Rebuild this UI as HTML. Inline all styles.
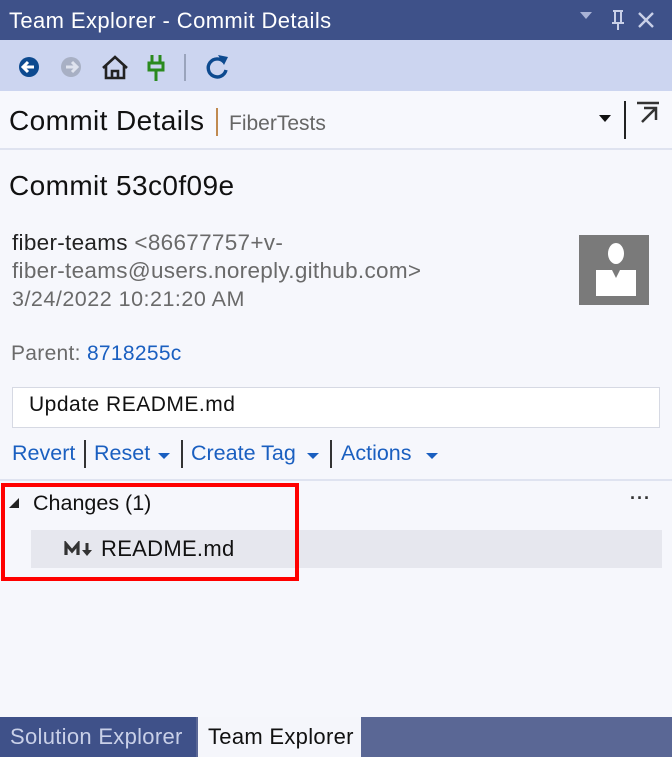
<!DOCTYPE html>
<html><head><style>
*{margin:0;padding:0;box-sizing:border-box}
body{width:672px;height:757px;background:#f6f7fc;font-family:"Liberation Sans",sans-serif;position:relative;overflow:hidden;color:#1e1e1e}
.a{position:absolute;white-space:nowrap}
.lk{color:#1a5fc0}
</style></head><body>
<div class="a" style="left:0;top:0;width:672px;height:40px;background:#3e5189"></div>
<div class="a" style="left:9px;top:8px;font-size:22px;color:#fff;letter-spacing:0.4px">Team Explorer - Commit Details</div>
<div class="a" style="left:580px;top:12px;width:0;height:0;border-left:6px solid transparent;border-right:6px solid transparent;border-top:7px solid #a9b3d6"></div>
<svg class="a" style="left:608px;top:8px" width="60" height="24"><path d="M5 3h10M7 3v12M13 3v12M4 15h12M10 15v7" stroke="#c9d0e8" stroke-width="2" fill="none"/><path d="M31 5l14 14M45 5L31 19" stroke="#c9d0e8" stroke-width="2.4"/></svg>
<div class="a" style="left:0;top:40px;width:672px;height:51px;background:#ccd5f0"></div>
<svg class="a" style="left:10px;top:50px" width="230" height="34">
<circle cx="19" cy="17" r="10" fill="#0d4a8f"/><path d="M24 17H14M18 12l-5 5 5 5" stroke="#fff" stroke-width="3" fill="none"/>
<circle cx="61" cy="17" r="10" fill="#a8b0c4"/><path d="M56 17h10M62 12l5 5-5 5" stroke="#dfe3ee" stroke-width="3" fill="none"/>
<path d="M93 18L105 7l12 11M96 16v12h18V16M102 28v-7h6v7" stroke="#222" stroke-width="2.6" fill="none"/>
<path d="M142 5v8M150 5v8M139 13h14v7h-14zM146 20v11" stroke="#2a8a1e" stroke-width="3" fill="none"/>
<path d="M175 4v27" stroke="#8a93aa" stroke-width="1.5"/>
<path d="M214 12a9 9 0 1 0 2 8" stroke="#0d4a8f" stroke-width="3.4" fill="none"/><path d="M208 5l10 2-4 8z" fill="#0d4a8f"/>
</svg>
<div class="a" style="left:0;top:91px;width:672px;height:59px;background:#f7f8fd;border-bottom:2px solid #dfe3f0"></div>
<div class="a" style="left:9px;top:105px;font-size:28px;color:#111;letter-spacing:0.4px">Commit Details</div>
<div class="a" style="left:216px;top:108px;width:1.5px;height:28px;background:#c08a50"></div>
<div class="a" style="left:229px;top:112px;font-size:21px;color:#666">FiberTests</div>
<div class="a" style="left:599px;top:115px;width:0;height:0;border-left:6px solid transparent;border-right:6px solid transparent;border-top:7px solid #111"></div>
<div class="a" style="left:624px;top:101px;width:1.5px;height:38px;background:#222"></div>
<svg class="a" style="left:634px;top:100px" width="30" height="30"><path d="M3 3h22M22 8L8 22M10 8h12v12" stroke="#333" stroke-width="2.5" fill="none"/></svg>
<div class="a" style="left:9px;top:170px;font-size:28px;color:#111;letter-spacing:0.4px">Commit 53c0f09e</div>
<div class="a" style="left:12px;top:230px;font-size:22.5px;letter-spacing:0.3px;color:#222">fiber-teams <span style="color:#6a6a6a">&lt;86677757+v-</span></div>
<div class="a" style="left:12px;top:258px;font-size:22.5px;letter-spacing:0.3px;color:#6a6a6a">fiber-teams@users.noreply.github.com&gt;</div>
<div class="a" style="left:12px;top:287px;font-size:21.5px;letter-spacing:0.5px;color:#6a6a6a">3/24/2022 10:21:20 AM</div>
<div class="a" style="left:579px;top:235px;width:70px;height:70px;background:#7a7a7a"></div>
<div class="a" style="left:608px;top:243px;width:16px;height:21px;border-radius:50%;background:#fff"></div>
<div class="a" style="left:596px;top:270px;width:40px;height:26px;background:#fff"></div>
<div class="a" style="left:612px;top:270px;width:8px;height:8px;background:#7a7a7a;clip-path:polygon(0 0,100% 0,50% 100%)"></div>
<div class="a" style="left:11px;top:342px;font-size:21px;letter-spacing:0.3px;color:#6a6a6a">Parent: <span class="lk">8718255c</span></div>
<div class="a" style="left:12px;top:387px;width:648px;height:41px;background:#fff;border:1.5px solid #d6d9e3"></div>
<div class="a" style="left:29px;top:393px;font-size:21px;letter-spacing:0.5px;color:#111">Update README.md</div>
<div class="a lk" style="left:12px;top:441px;font-size:21.5px">Revert</div>
<div class="a" style="left:84px;top:440px;width:1.5px;height:28px;background:#333"></div>
<div class="a lk" style="left:94px;top:441px;font-size:21.5px">Reset</div>
<div class="a" style="left:158px;top:453px;border-left:6px solid transparent;border-right:6px solid transparent;border-top:6px solid #1a5fc0"></div>
<div class="a" style="left:181px;top:440px;width:1.5px;height:28px;background:#333"></div>
<div class="a lk" style="left:191px;top:441px;font-size:21.5px">Create Tag</div>
<div class="a" style="left:307px;top:453px;border-left:6px solid transparent;border-right:6px solid transparent;border-top:6px solid #1a5fc0"></div>
<div class="a" style="left:330px;top:440px;width:1.5px;height:28px;background:#333"></div>
<div class="a lk" style="left:341px;top:441px;font-size:21.5px">Actions</div>
<div class="a" style="left:426px;top:453px;border-left:6px solid transparent;border-right:6px solid transparent;border-top:6px solid #1a5fc0"></div>
<div class="a" style="left:0;top:479px;width:672px;height:2px;background:#dfe3f0"></div>
<div class="a" style="left:9px;top:498px;width:0;height:0;border-left:10px solid transparent;border-bottom:10px solid #222"></div>
<div class="a" style="left:33px;top:491px;font-size:21.5px;color:#111">Changes (1)</div>
<div class="a" style="left:630px;top:488px;font-size:18px;font-weight:bold;color:#333;letter-spacing:1px">···</div>
<div class="a" style="left:31px;top:530px;width:631px;height:38px;background:#e6e7ee"></div>
<svg class="a" style="left:64px;top:541px" width="32" height="16"><path d="M2 14V3l6 7 6-7v11" stroke="#333" stroke-width="3.2" fill="none"/><path d="M23 2v9" stroke="#333" stroke-width="3"/><path d="M18 9h10l-5 6z" fill="#333"/></svg>
<div class="a" style="left:101px;top:536px;font-size:22px;letter-spacing:0.3px;color:#111">README.md</div>
<div class="a" style="left:1px;top:483px;width:298px;height:98px;border:4px solid #f00"></div>
<div class="a" style="left:0;top:717px;width:672px;height:40px;background:#5a6795"></div>
<div class="a" style="left:0;top:717px;width:196px;height:40px;background:#3f5189"></div>
<div class="a" style="left:10px;top:724px;font-size:22px;color:#c9d0e8;letter-spacing:0.3px">Solution Explorer</div>
<div class="a" style="left:198px;top:717px;width:163px;height:40px;background:#f5f6fb"></div>
<div class="a" style="left:208px;top:724px;font-size:22px;color:#111;letter-spacing:0.3px">Team Explorer</div>
</body></html>
